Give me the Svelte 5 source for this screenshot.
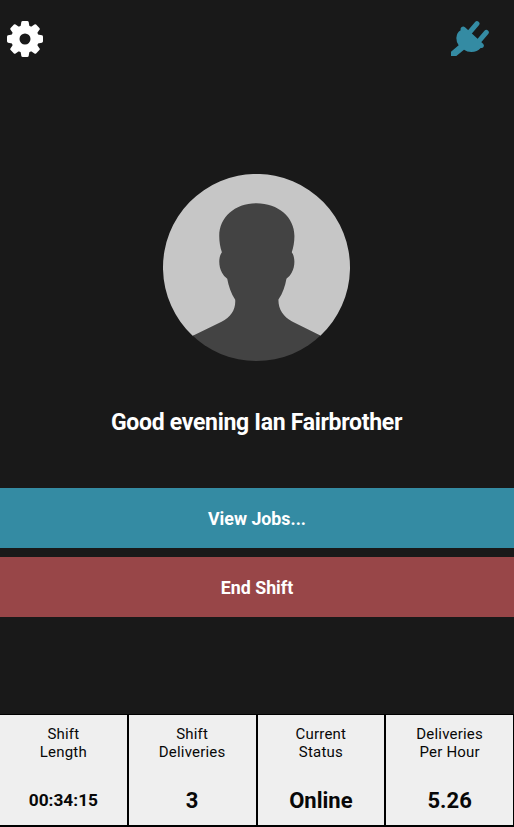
<div class="home">
  <header class="toolbar">
    <button class="icon-button" aria-label="Settings">
      <svg class="gear" viewBox="-54 -54 108 108" aria-hidden="true">
        <circle class="ring" r="29" />
        {#each teeth as angle}
          <path
            d="M-14-34-11-51q1-3 4-3H7q3 0 4 3l3 17z"
            transform="rotate({angle})" />
        {/each}
      </svg>
    </button>

    <button class="icon-button" aria-label="Connection">
      <svg class="plug" viewBox="9 9 114 105" aria-hidden="true">
        <path class="prong" d="M64 44 87 17M92 70l23-27" />
        <path
          d="M40 28Q46 23 51 28L106 78Q110 83 106 88 104 91 98 90 88 102 70 102 57 102 48 95L25 114H9V101L32 82Q25 73 25 60 26 44 38 37 36 32 40 28z" />
      </svg>
    </button>
  </header>

  <section class="profile">
    <svg class="avatar" viewBox="38 26 562 562" aria-hidden="true">
      <defs>
        <clipPath id="avatar-clip">
          <circle cx="319" cy="307" r="281" />
        </clipPath>
      </defs>
      <path class="backdrop" d="M127 512A281 281 0 1 1 511 512z" />
      <path
        class="person"
        clip-path="url(#avatar-clip)"
        d="M319 114c-65 0-112 42-112 98 0 18 3 34 8 49-11 15-10 43 0 61 4 8 9 13 16 19 4 22 12 46 24 63 2 29-13 52-41 66L126 513V600H514V513L426 469c-27-14-42-37-41-66 13-18 20-40 24-62 7-6 12-11 16-19 10-18 11-46 0-61 5-15 8-31 8-49 0-56-49-98-114-98z" />
    </svg>
    <h1 class="greeting">Good evening {name}</h1>
  </section>

  <div class="actions">
    <button class="action action--primary">View Jobs...</button>
    <button class="action action--danger">End Shift</button>
  </div>

  <footer class="stats">
    {#each stats as stat}
      <div class="stat">
        <div class="label">
          {#each stat.label as line}
            <span>{line}</span>
          {/each}
        </div>
        <strong class="value" class:value--small={stat.small}>{stat.value}</strong>
      </div>
    {/each}
  </footer>
</div>

<style>
  :global(body) {
    background-color: #191919;
    margin: 0;
  }

  .home {
    background-color: #191919;
    color: #fff;
    display: flex;
    flex-direction: column;
    font-family: Roboto, "Liberation Sans", sans-serif;
    height: 100vh;
    overflow: hidden;
  }

  button {
    border: 0;
    color: inherit;
    cursor: pointer;
    font-family: inherit;
    padding: 0;
  }

  .toolbar {
    align-items: flex-start;
    box-sizing: border-box;
    display: flex;
    height: 77px;
    justify-content: space-between;
    padding: 21px 25px 0 7px;
  }

  .icon-button {
    background: none;
    display: flex;
  }

  .gear {
    fill: #fff;
    height: 36px;
    width: 36px;
  }

  .ring {
    fill: none;
    stroke: #fff;
    stroke-width: 25px;
  }

  .plug {
    fill: #348ba3;
    height: 35px;
    width: 38px;
  }

  .prong {
    fill: none;
    stroke: #348ba3;
    stroke-linecap: round;
    stroke-width: 15px;
  }

  .profile {
    align-items: center;
    box-sizing: border-box;
    display: flex;
    flex-direction: column;
    height: 411px;
    padding: 97px 1px 0 0;
  }

  .avatar {
    height: 187px;
    width: 187px;
  }

  .backdrop {
    fill: #c6c6c6;
  }

  .person {
    fill: #434343;
  }

  .greeting {
    font-size: 23px;
    font-weight: 700;
    letter-spacing: -0.3px;
    line-height: 28px;
    margin: 48px 0 0;
  }

  .actions {
    display: flex;
    flex-direction: column;
    gap: 9px;
  }

  .action {
    font-size: 17.8px;
    font-weight: 700;
    height: 60px;
  }

  .action--primary {
    background-color: #348ba3;
  }

  .action--danger {
    background-color: #984648;
  }

  .stats {
    background-color: #000;
    color: #080808;
    display: grid;
    gap: 2px;
    grid-template-columns: repeat(4, 1fr);
    margin-top: auto;
    padding: 1px 1px 2px 0;
  }

  .stat {
    align-items: center;
    background-color: #efefef;
    display: flex;
    flex-direction: column;
    height: 110px;
  }

  .label {
    align-items: center;
    display: flex;
    flex-direction: column;
    font-size: 15px;
    letter-spacing: 0.2px;
    line-height: 18px;
    padding-top: 10px;
  }

  .value {
    font-size: 22px;
    font-weight: 700;
    line-height: 28px;
    margin-top: 26px;
  }

  .value--small {
    font-size: 17.3px;
    line-height: 26px;
  }
</style>

<script>
  // Constants
  const name = 'Ian Fairbrother';

  const teeth = [0, 45, 90, 135, 180, 225, 270, 315];

  const stats = [
    { label: ['Shift', 'Length'], value: '00:34:15', small: true },
    { label: ['Shift', 'Deliveries'], value: '3' },
    { label: ['Current', 'Status'], value: 'Online' },
    { label: ['Deliveries', 'Per Hour'], value: '5.26' },
  ];
</script>
